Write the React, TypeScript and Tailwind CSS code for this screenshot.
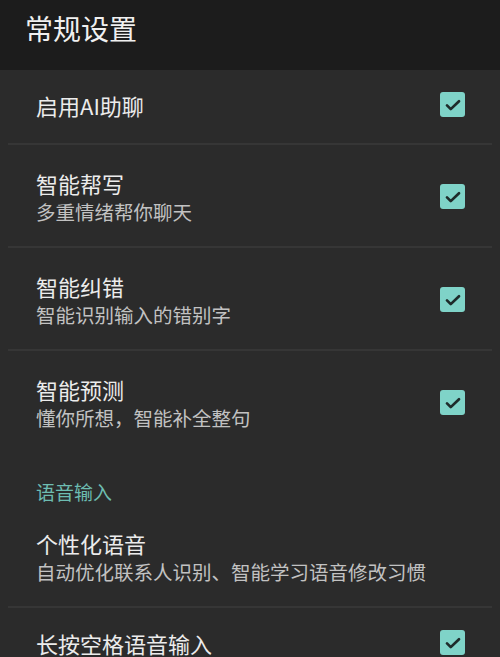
import React from 'react';

const font = { fontFamily: '"Noto Sans CJK SC", "Noto Sans", sans-serif' };

interface Item {
  title: string;
  desc?: string;
  checked?: boolean;
  divider?: boolean;
}

function CheckBox() {
  return (
    <div className="w-[25px] h-[25px] rounded-[3px] bg-[#7fd3c8] flex items-center justify-center">
      <svg width="18" height="18" viewBox="0 0 24 24" fill="none">
        <path
          d="M4 12.5l5 5L20 7"
          stroke="#1e2b2a"
          strokeWidth="3.6"
          strokeLinecap="round"
          strokeLinejoin="round"
        />
      </svg>
    </div>
  );
}

function Row({ item }: { item: Item }) {
  return (
    <div>
      <div
        className={`flex items-center justify-between pl-9 pr-[35px] ${
          item.desc ? 'h-[101px] pt-[2px]' : 'h-[73px] pb-[4px]'
        }`}
      >
        <div className="flex flex-col">
          <div className="text-[22px] leading-[30px] text-[#ececec]">
            {item.title}
          </div>
          {item.desc && (
            <div className="text-[19.5px] leading-[28px] text-[#c2c2c2] whitespace-nowrap">
              {item.desc}
            </div>
          )}
        </div>
        {item.checked && <CheckBox />}
      </div>
      {item.divider && <div className="mx-[8px] h-[2px] bg-[#363636]" />}
    </div>
  );
}

const general: Item[] = [
  { title: '启用AI助聊', checked: true, divider: true },
  { title: '智能帮写', desc: '多重情绪帮你聊天', checked: true, divider: true },
  { title: '智能纠错', desc: '智能识别输入的错别字', checked: true, divider: true },
  { title: '智能预测', desc: '懂你所想，智能补全整句', checked: true },
];

const voice: Item[] = [
  { title: '个性化语音', desc: '自动优化联系人识别、智能学习语音修改习惯', divider: true },
  { title: '长按空格语音输入', checked: true },
];

export default function App() {
  return (
    <div className="w-[500px] h-[657px] overflow-hidden bg-[#2b2b2b]" style={font}>
      <div className="h-[70px] bg-[#1c1c1c] flex items-center pl-[25px] pb-[14px]">
        <h1 className="text-[28px] text-[#f0f0f0]">常规设置</h1>
      </div>
      {general.map((item) => (
        <Row key={item.title} item={item} />
      ))}
      <div className="h-[53px] flex items-end pl-9">
        <span className="text-[19px] leading-[26px] text-[#6dbcb1]">语音输入</span>
      </div>
      {voice.map((item) => (
        <Row key={item.title} item={item} />
      ))}
    </div>
  );
}
